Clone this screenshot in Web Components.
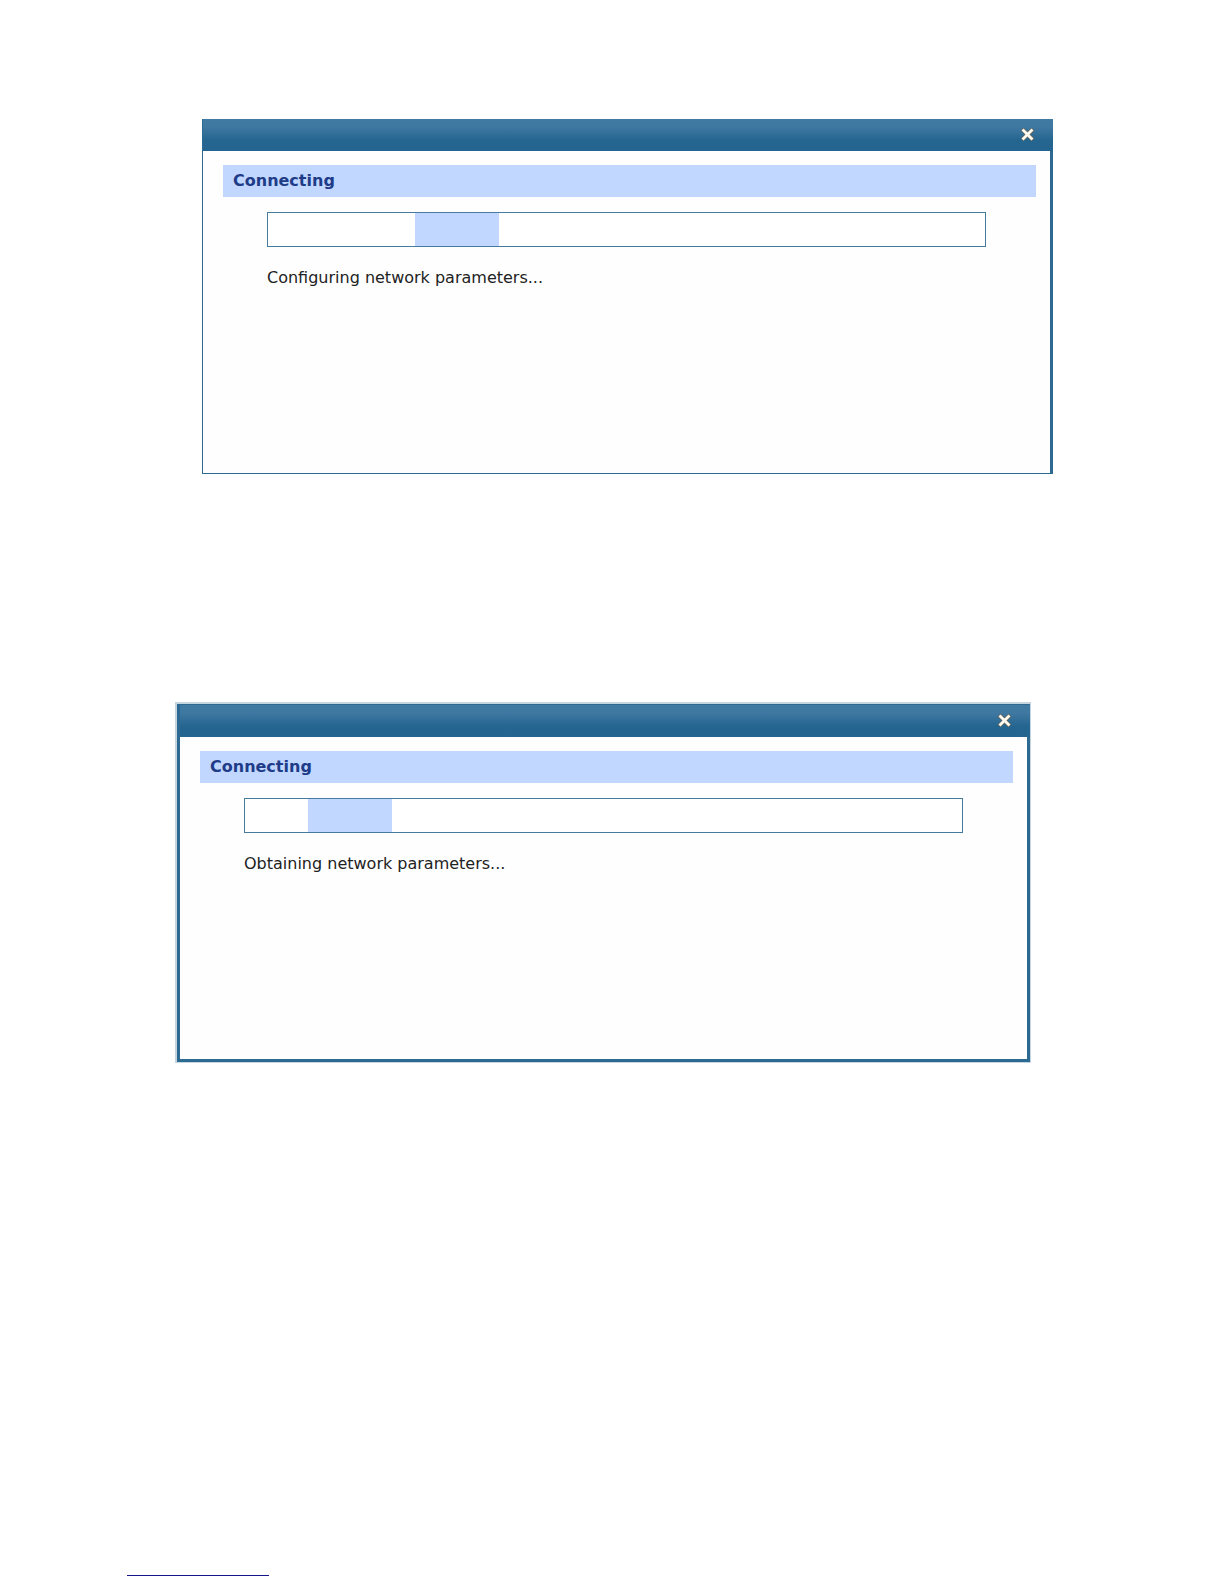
<!DOCTYPE html>
<html lang="en">
<head>
<meta charset="utf-8">
<title>Connecting</title>
<style>
  body {
    margin: 0;
    background: #fff;
    font-family: Verdana, "DejaVu Sans", sans-serif;
    font-size: 16px;
  }
</style>
</head>
<body>
<connect-page>
  <connect-dialog heading="Connecting">
    <progress-track style="--start: 147px"></progress-track>
    <span>Configuring network parameters...</span>
  </connect-dialog>
  <connect-dialog heading="Connecting" framed>
    <progress-track style="--start: 63px"></progress-track>
    <span>Obtaining network parameters...</span>
  </connect-dialog>
</connect-page>

<script>
class ConnectPage extends HTMLElement {
  constructor() {
    super();
    this.attachShadow({ mode: 'open' });
    this.shadowRoot.innerHTML = `
      <style>
        :host {
          display: flex;
          flex-direction: column;
          box-sizing: border-box;
          min-height: 100vh;
          padding: 119px 0 8px;
        }

        ::slotted(connect-dialog) {
          margin: 0 171px 228px 202px;
        }

        ::slotted(connect-dialog[framed]) {
          margin: 0 193px 40px 175px;
        }

        hr {
          width: 142px;
          margin: auto 0 0 127px;
          border: 0;
          border-top: 1px solid #17178c;
        }
      </style>
      <slot></slot>
      <hr>
    `;
  }
}

class ConnectDialog extends HTMLElement {
  constructor() {
    super();
    this.attachShadow({ mode: 'open' });
  }

  connectedCallback() {
    this.render();
  }

  render() {
    const heading = this.getAttribute('heading') || '';

    this.shadowRoot.innerHTML = `
      <style>
        :host {
          display: block;
        }

        /* The framed variant has a pale line round the blue one */
        :host([framed]) {
          border: 1px solid #c5d5e0;
          border-width: 2px 1px 1px 2px;
        }

        section {
          border: solid #2d6a91;
          border-width: 0 3px 1px 1px;
          background: #fefefe;
        }

        :host([framed]) section {
          border-width: 1px 3px 3px;
        }

        header {
          display: flex;
          justify-content: flex-end;
          align-items: center;
          box-sizing: border-box;
          height: 32px;
          margin-right: -3px;
          padding: 0 18px 2px 0;
          background: linear-gradient(#4079a2, #3f78a1 25%, #256691 65%, #236590);
        }

        button {
          display: flex;
          padding: 0;
          border: 0;
          background: none;
          cursor: pointer;
        }

        .content {
          display: flex;
          flex-direction: column;
          padding: 14px 14px 183px 20px;
        }

        h2 {
          margin: 0 0 15px;
          padding: 0 10px;
          background: #c2d7ff;
          color: #203c88;
          font-size: 16px;
          line-height: 32px;
        }

        .status {
          display: flex;
          flex-direction: column;
          gap: 19px;
          margin: 0 50px 0 44px;
          color: #222;
          line-height: 24px;
        }
      </style>
      <section>
        <header>
          <button type="button" aria-label="Close">
            <svg width="15" height="15" viewBox="0 0 15 15" fill="none" stroke-linecap="square">
              <path d="M3.5 3.5l8 8M11.500 3.500l-8 8" stroke="#6b604f" stroke-width="4"/>
              <path d="M3.500 3.500l8 8M11.500 3.500l-8 8" stroke="#fffaf0" stroke-width="2.800"/>
            </svg>
          </button>
        </header>
        <div class="content">
          <h2>${heading}</h2>
          <div class="status"><slot></slot></div>
        </div>
      </section>
    `;
  }
}

class ProgressTrack extends HTMLElement {
  constructor() {
    super();
    this.attachShadow({ mode: 'open' });
    this.shadowRoot.innerHTML = `
      <style>
        :host {
          display: block;
        }

        .track {
          display: flex;
          height: 33px;
          padding-left: var(--start, 0);
          border: 1px solid #467b9f;
          background: #fff;
        }

        .block {
          width: 84px;
          background: #c2d7ff;
        }
      </style>
      <div class="track" role="progressbar"><div class="block"></div></div>
    `;
  }
}

customElements.define('connect-page', ConnectPage);
customElements.define('connect-dialog', ConnectDialog);
customElements.define('progress-track', ProgressTrack);
</script>
</body>
</html>
